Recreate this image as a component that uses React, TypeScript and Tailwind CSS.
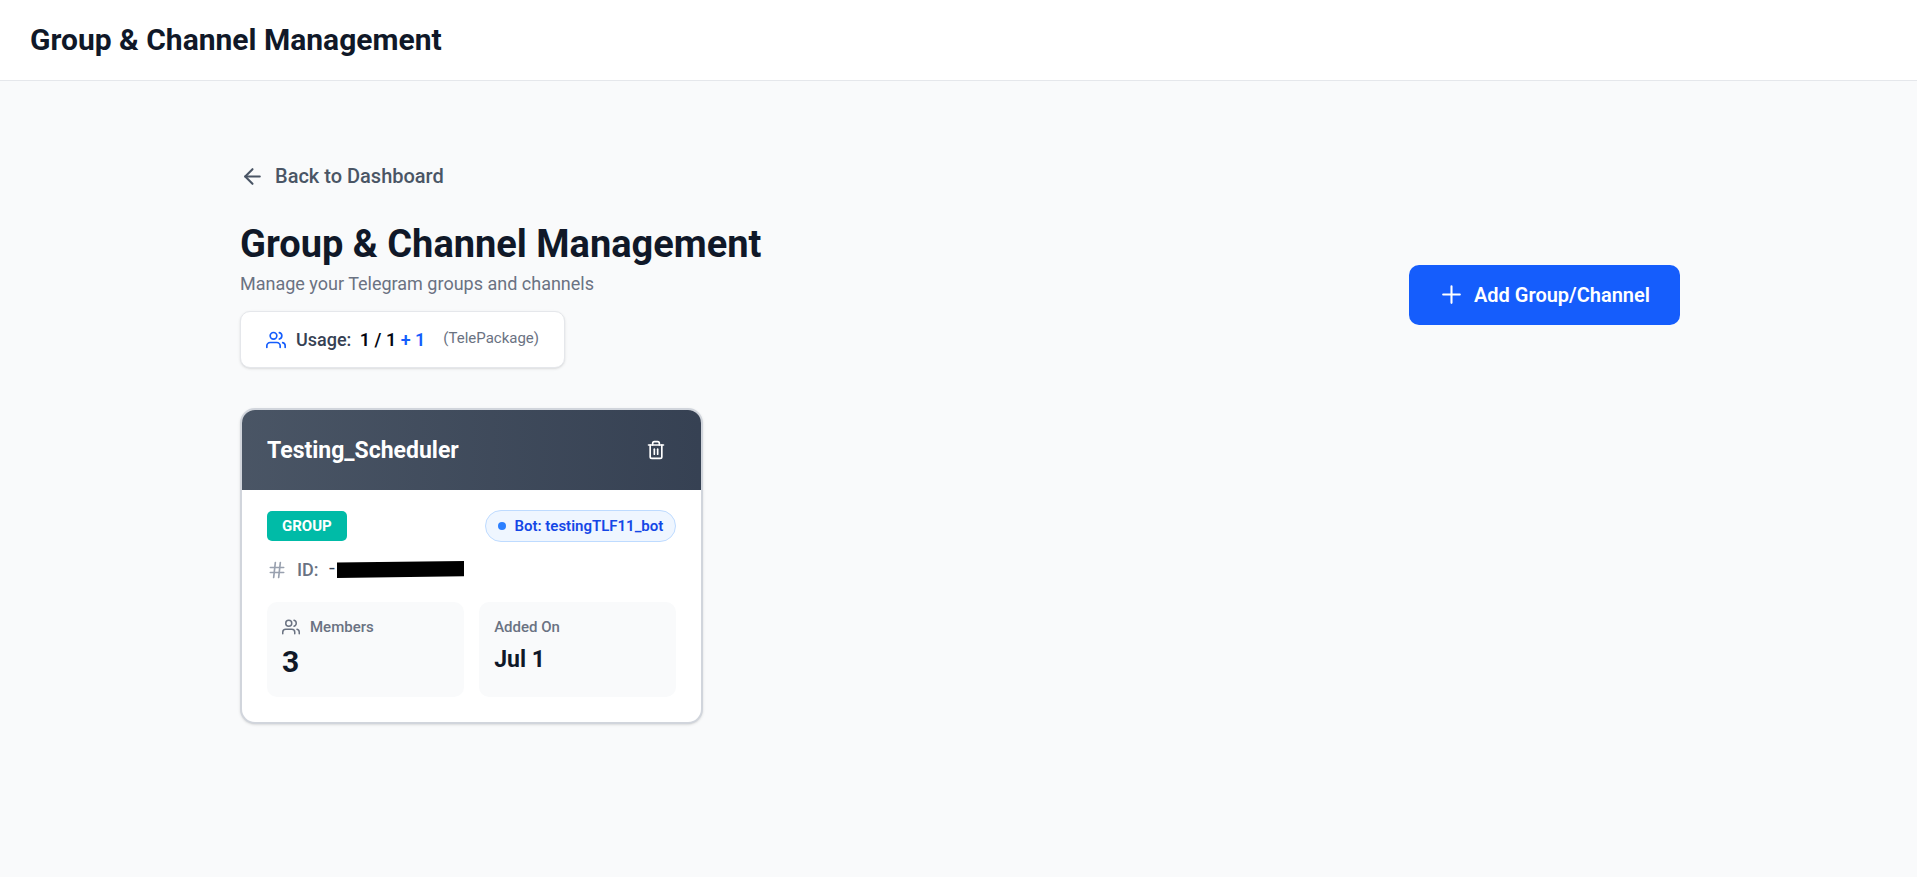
import { FiArrowLeft, FiHash, FiTrash2, FiUsers } from "react-icons/fi";

function PlusIcon() {
  return (
    <svg className="size-[25px]" viewBox="0 0 24 24" fill="none" stroke="currentColor" strokeWidth={2} strokeLinecap="round" aria-hidden="true">
      <path d="M12 4v16M4 12h16" />
    </svg>
  );
}

function Header() {
  return (
    <header className="border-b border-gray-200 bg-white px-[30px] py-5">
      <h2 className="text-[30px] leading-10 font-bold text-gray-900">Group &amp; Channel Management</h2>
    </header>
  );
}

function UsageBadge() {
  return (
    <div className="mt-[15px] flex w-fit items-center rounded-[10px] border border-gray-200 bg-white px-[25px] py-[15px] shadow-sm">
      <FiUsers className="mr-[10px] size-5 text-blue-600" />
      <p className="text-[18px] leading-[25px] font-medium text-gray-700">
        Usage: <span className="ml-1 font-semibold text-gray-950">1 / 1</span>{" "}
        <span className="font-semibold text-blue-600">+ 1</span>
      </p>
      <span className="ml-[18px] self-start text-[15px] leading-[22px] text-gray-500">(TelePackage)</span>
    </div>
  );
}

function GroupCard() {
  return (
    <article className="overflow-hidden rounded-[15px] border-2 border-gray-300 bg-white shadow-sm">
      <div className="flex h-20 items-center justify-between bg-linear-to-r from-gray-600 to-gray-700 px-[25px]">
        <h3 className="text-[23px] leading-[35px] font-bold text-white">Testing_Scheduler</h3>
        <button type="button" aria-label="Delete group" className="rounded-[10px] p-[10px] text-white">
          <FiTrash2 className="size-5" />
        </button>
      </div>
      <div className="px-[25px] pt-5 pb-[25px]">
        <div className="flex items-center justify-between">
          <span className="rounded-[5px] bg-teal-500 px-[15px] py-[5px] text-[15px] leading-5 font-bold text-white">GROUP</span>
          <span className="flex items-center gap-2 rounded-full border border-blue-200 bg-blue-50 px-3 py-[5px] text-[15px] leading-5 font-semibold text-blue-700">
            <span className="size-2 rounded-full bg-blue-500" />
            Bot: testingTLF11_bot
          </span>
        </div>
        <div className="mt-[15px] flex items-center text-[18px] leading-[25px] text-gray-500">
          <FiHash className="mr-[10px] size-5 text-gray-400" />
          <span className="font-medium">ID:</span>
          <span className="ml-2 font-['Liberation_Mono',monospace] text-gray-700">-</span>
          <svg className="h-[17px] w-[127px]" viewBox="0 0 127 17" aria-hidden="true">
            <path d="M0 1.5 127 0V15.3L0 17Z" fill="#000" />
          </svg>
        </div>
        <div className="mt-5 grid grid-cols-2 gap-[15px]">
          <div className="rounded-[10px] bg-gray-50 p-[15px]">
            <p className="flex items-center gap-[10px] text-[15px] leading-5 font-medium text-gray-500">
              <FiUsers className="size-[18px]" />
              Members
            </p>
            <p className="mt-[5px] text-[30px] leading-10 font-bold text-gray-900">3</p>
          </div>
          <div className="rounded-[10px] bg-gray-50 p-[15px]">
            <p className="text-[15px] leading-5 font-medium text-gray-500">Added On</p>
            <p className="mt-[5px] text-[23px] leading-[35px] font-bold text-gray-900">Jul 1</p>
          </div>
        </div>
      </div>
    </article>
  );
}

export default function App() {
  return (
    <div className="min-h-screen bg-gray-50 font-['Roboto',sans-serif] text-gray-900">
      <Header />
      <main className="py-20 pl-[3px]">
        <div className="mx-auto max-w-[1440px]">
          <a href="#dashboard" className="flex w-fit items-center gap-[10px] text-[20px] leading-[30px] font-medium text-gray-600">
            <FiArrowLeft className="size-[25px]" />
            Back to Dashboard
          </a>
          <div className="mt-[30px] flex items-center justify-between">
            <div>
              <h1 className="text-[38px] leading-[47px] font-bold text-gray-900">Group &amp; Channel Management</h1>
              <p className="mt-[3px] text-[18px] leading-[25px] text-gray-500">Manage your Telegram groups and channels</p>
              <UsageBadge />
            </div>
            <button type="button" className="flex items-center gap-[10px] rounded-[10px] bg-blue-600 px-[30px] py-[15px] text-[20px] leading-[30px] font-semibold text-white">
              <PlusIcon />
              Add Group/Channel
            </button>
          </div>
          <div className="mt-10 grid grid-cols-3 gap-[25px]">
            <GroupCard />
          </div>
        </div>
      </main>
    </div>
  );
}
